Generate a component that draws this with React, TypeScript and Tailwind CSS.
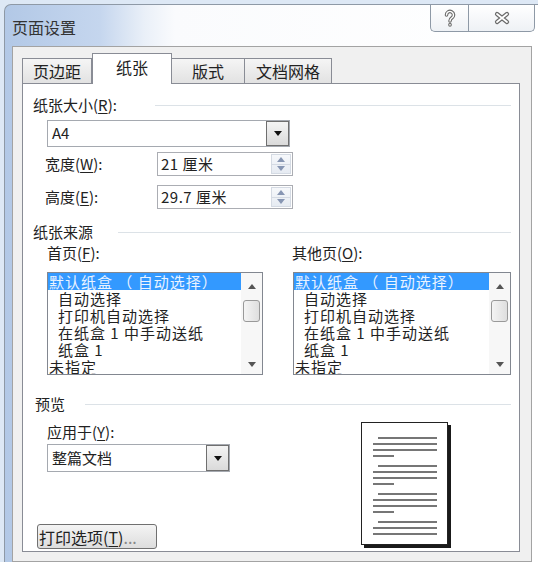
import type { ReactNode } from 'react'

// Word "页面设置" dialog, 纸张 tab

function Key({ k }: { k: string }) {
  return <>(<span className="underline underline-offset-2">{k}</span>)</>
}

function SectionHeader({ children, gap }: { children: ReactNode; gap: string }) {
  return (
    <div className="flex items-center h-[18px] text-[15px] leading-[18px]">
      <span className="whitespace-nowrap">{children}</span>
      <div className={`flex-1 h-px bg-[#dce2e7] ${gap}`} />
    </div>
  )
}

function ArrowDown({ color = '#111' }: { color?: string }) {
  return (
    <svg width="8" height="5" viewBox="0 0 8 5">
      <path d="M0 0 H8 L4 5 Z" fill={color} />
    </svg>
  )
}

function ArrowUp({ color = '#111' }: { color?: string }) {
  return (
    <svg width="8" height="5" viewBox="0 0 8 5">
      <path d="M0 5 H8 L4 0 Z" fill={color} />
    </svg>
  )
}

function Dropdown({ value, className }: { value: string; className: string }) {
  return (
    <div className={`flex border border-[#a5a9b0] bg-white ${className}`}>
      <div className="flex-1 flex items-center pl-[4px] text-[15px]">{value}</div>
      <div className="w-[23px] flex items-center justify-center border border-[#6f6f6f] bg-[linear-gradient(#f4f4f4,#dadada)]">
        <ArrowDown />
      </div>
    </div>
  )
}

function Spinner({ value }: { value: string }) {
  return (
    <div className="flex w-[136px] h-[24px] border border-[#abadb3] bg-white">
      <div className="flex-1 flex items-center pl-[3px] text-[15px] tracking-[0.5px]">{value}</div>
      <div className="w-[20px] my-[1px] mr-[1px] flex flex-col border border-[#d4dae3] bg-[linear-gradient(#f6f8fb,#e6ebf2)]">
        <div className="flex-1 flex items-center justify-center border-b border-[#d4dae3]">
          <ArrowUp color="#8796b3" />
        </div>
        <div className="flex-1 flex items-center justify-center">
          <ArrowDown color="#8796b3" />
        </div>
      </div>
    </div>
  )
}

const trayItems = [
  { text: '默认纸盒 （ 自动选择）', indent: false, selected: true },
  { text: '自动选择', indent: true },
  { text: '打印机自动选择', indent: true },
  { text: '在纸盒 1 中手动送纸', indent: true },
  { text: '纸盒 1', indent: true },
  { text: '未指定', indent: false },
]

function ListBox({ className }: { className: string }) {
  return (
    <div className={`flex h-[103px] border border-[#828790] bg-white overflow-hidden ${className}`}>
      <div className="flex-1 flex flex-col overflow-hidden">
        {trayItems.map((it, i) => (
          <div
            key={i}
            className={`h-[17px] text-[15px] leading-[17px] tracking-[1px] whitespace-nowrap ${it.selected ? 'bg-[#3399ff] text-[#eaf3ff]' : ''} ${it.indent ? 'pl-[10px]' : 'pl-[1px]'}`}
          >
            {it.text}
          </div>
        ))}
      </div>
      <div className="w-[21px] flex flex-col items-center bg-[#f7f7f7]">
        <div className="h-[27px] flex items-center justify-center">
          <ArrowUp color="#555" />
        </div>
        <div className="w-[17px] h-[22px] rounded-[3px] border border-[#999] bg-[linear-gradient(90deg,#f4f4f4,#dedede)]" />
        <div className="flex-1" />
        <div className="h-[20px] flex items-center justify-center">
          <ArrowDown color="#555" />
        </div>
      </div>
    </div>
  )
}

function PagePreview() {
  const groups = [4, 4, 4, 3]
  return (
    <div className="w-[87px] h-[123px] border border-[#222] bg-white shadow-[3px_3px_0_#1a1a1a] pl-[11px] pt-[14px] flex flex-col gap-[8px]">
      {groups.map((n, g) => (
        <div key={g} className="flex flex-col gap-[4px]">
          {Array.from({ length: n }).map((_, i) => (
            <div
              key={i}
              className={`h-[2px] bg-[#767676] ${i === 0 ? 'ml-[5px] w-[59px]' : n === 4 && i === 3 ? 'w-[21px]' : 'w-[64px]'}`}
            />
          ))}
        </div>
      ))}
    </div>
  )
}

function CaptionButtons() {
  return (
    <div className="flex mr-[3px]">
      <div className="w-[38px] h-[27px] flex items-center justify-center border-l border-b border-[#8e99a6] rounded-bl-[5px] bg-[linear-gradient(#ffffff,#eef1f5)]">
        <svg width="14" height="19" viewBox="0 0 14 19">
          <g fill="none" strokeLinecap="round">
            <path d="M3.5 6 a3.5 3.5 0 1 1 5.5 2.8 c-1.5 1 -2 1.6 -2 3.2 M7 15.5 v0.5" stroke="#6a6a6a" strokeWidth="3.6" />
            <path d="M3.5 6 a3.5 3.5 0 1 1 5.5 2.8 c-1.5 1 -2 1.6 -2 3.2 M7 15.5 v0.5" stroke="#fff" strokeWidth="1.4" />
          </g>
        </svg>
      </div>
      <div className="w-[67px] h-[27px] flex items-center justify-center border-l border-r border-b border-[#8e99a6] rounded-br-[5px] bg-[linear-gradient(#ffffff,#eef1f5)]">
        <svg width="18" height="14" viewBox="0 0 18 14">
          <g strokeLinecap="round">
            <path d="M4 3 L14 11 M14 3 L4 11" stroke="#6a6a6a" strokeWidth="4.2" />
            <path d="M4 3 L14 11 M14 3 L4 11" stroke="#fff" strokeWidth="1.8" />
          </g>
        </svg>
      </div>
    </div>
  )
}

const tabs = [
  { label: '页边距', w: 'w-[70px]' },
  { label: '纸张', w: 'w-[80px]', active: true },
  { label: '版式', w: 'w-[73px]' },
  { label: '文档网格', w: 'w-[87px]' },
]

export default function App() {
  return (
    <div className="w-[538px] h-[562px] overflow-hidden bg-[#dde8f5] text-[#222] font-['Noto_Sans_CJK_SC',sans-serif]">
      <div className="mt-[4px] ml-[4px] h-[558px] flex flex-col border-t border-l border-[#8e99a6] rounded-tl-[7px] bg-[linear-gradient(90deg,#b2c8e6_0px,#c5d6ee_95px,#eaf0f8_140px,#fafbfd_170px,#ffffff_100%)]">

        {/* Title bar */}
        <div className="h-[41px] flex justify-between items-start">
          <div className="pl-[7px] pt-[13px] text-[16px] leading-[18px] text-[#333]">页面设置</div>
          <CaptionButtons />
        </div>

        {/* Body */}
        <div className="ml-[7px] w-[520px] flex-1 border border-[#a3a3a3] bg-[#f0f0f0] pl-[9px] pt-[6px]">

          {/* Tabs */}
          <div className="flex items-end">
            {tabs.map(t => (
              <div
                key={t.label}
                className={t.active
                  ? `${t.w} h-[31px] -mb-px relative z-10 flex items-center justify-center border-l border-t border-r border-[#898c95] bg-white text-[16px] pb-[4px]`
                  : `${t.w} h-[25px] flex items-center justify-center border-t border-r border-[#898c95] first:border-l bg-[linear-gradient(#f5f5f5,#e2e2e2)] text-[16px]`}
              >
                {t.label}
              </div>
            ))}
          </div>

          {/* Panel */}
          <div className="w-[498px] h-[469px] border border-[#898c95] bg-white pl-[10px] pr-[8px] pt-[12px]">
            <SectionHeader gap="ml-[38px]">纸张大小<Key k="R" />:</SectionHeader>

            <Dropdown value="A4" className="mt-[6px] ml-[14px] w-[243px] h-[27px]" />

            <div className="mt-[5px] flex items-center h-[24px]">
              <div className="ml-[12px] w-[112px] text-[15px]">宽度<Key k="W" />:</div>
              <Spinner value="21 厘米" />
            </div>
            <div className="mt-[9px] flex items-center h-[24px]">
              <div className="ml-[12px] w-[112px] text-[15px]">高度<Key k="E" />:</div>
              <Spinner value="29.7 厘米" />
            </div>

            <div className="mt-[14px]">
              <SectionHeader gap="ml-[25px]">纸张来源</SectionHeader>
            </div>

            <div className="mt-[3px] flex">
              <div className="w-[259px] pl-[14px]">
                <div className="h-[18px] text-[15px] leading-[18px]">首页<Key k="F" />:</div>
                <ListBox className="mt-[10px] w-[216px]" />
              </div>
              <div className="flex-1">
                <div className="h-[18px] text-[15px] leading-[18px]">其他页<Key k="O" />:</div>
                <ListBox className="mt-[10px] ml-[1px] w-[218px]" />
              </div>
            </div>

            <div className="mt-[20px] pl-[2px]">
              <SectionHeader gap="ml-[20px]">预览</SectionHeader>
            </div>

            <div className="flex">
              <div className="w-[328px] flex flex-col items-start">
                <div className="mt-[10px] ml-[14px] h-[18px] text-[15px] leading-[18px]">应用于<Key k="Y" />:</div>
                <Dropdown value="整篇文档" className="mt-[3px] ml-[14px] w-[183px] h-[28px]" />
                <button className="mt-[52px] ml-[4px] w-[120px] h-[25px] flex items-center pl-[1px] rounded-[3px] border border-[#707070] bg-[linear-gradient(#f4f4f4,#dddddd)] text-[16px] whitespace-nowrap">
                  打印选项<Key k="T" /><span className="text-[#888]">...</span>
                </button>
              </div>
              <div className="mt-[9px]">
                <PagePreview />
              </div>
            </div>
          </div>
        </div>
      </div>
    </div>
  )
}
